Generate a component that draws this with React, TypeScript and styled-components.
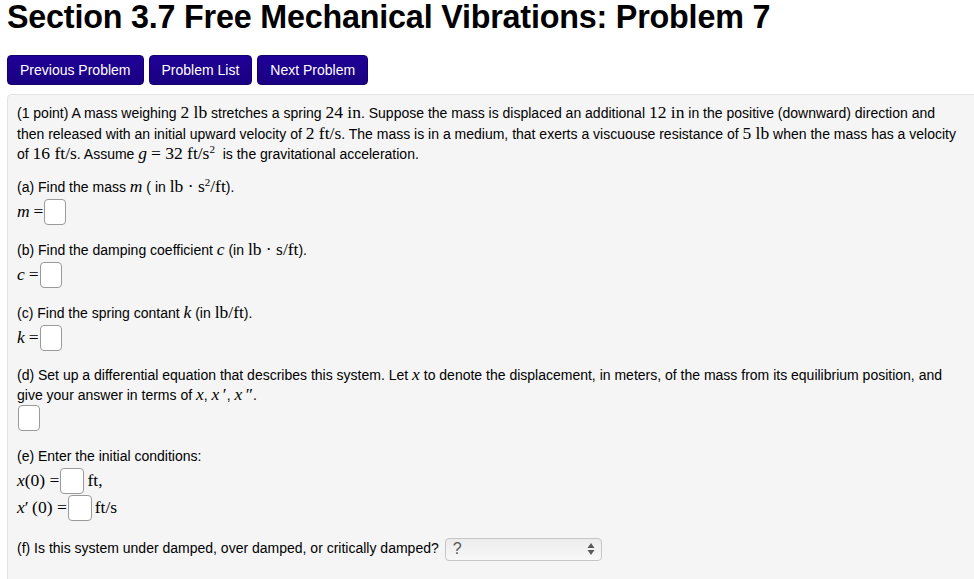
import React from 'react'
import styled, { createGlobalStyle } from 'styled-components'

const Global = createGlobalStyle`
  html, body {
    margin: 0;
    padding: 0;
    background: #ffffff;
    overflow: hidden;
  }
  body {
    font-family: "Liberation Sans", Helvetica, Arial, sans-serif;
    color: #000;
  }
`

const Page = styled.div`
  padding: 0 0 0 7px;
`

const Title = styled.h1`
  margin: 0;
  padding-top: 0;
  font-size: 32.3px;
  line-height: 35px;
  font-weight: bold;
  letter-spacing: -0.2px;
`

const Nav = styled.nav`
  display: flex;
  gap: 5px;
  margin-top: 20px;
`

const NavButton = styled.a`
  display: flex;
  align-items: center;
  height: 30px;
  padding: 0 12px;
  box-sizing: border-box;
  border-radius: 4px;
  border: 1px solid #16006e;
  background: linear-gradient(#1f0096, #1a0082);
  color: #fff;
  font-size: 14px;
  text-decoration: none;
`

const Panel = styled.div`
  margin-top: 9px;
  width: 1000px;
  box-sizing: border-box;
  background: #f5f5f5;
  border: 1px solid #e3e3e3;
  border-radius: 4px;
  padding: 8px 9px 40px;
  font-size: 14px;
  line-height: 20.5px;
`

const Para = styled.p`
  margin: 0 0 12px;
`

const M = styled.span`
  font-family: "Liberation Serif", "Times New Roman", serif;
  font-size: 17.5px;
  line-height: 1;
`

const V = styled(M)`
  font-style: italic;
`

const Sup = styled.sup`
  font-size: 11px;
  line-height: 0;
  vertical-align: 6px;
`

const Row = styled.div<{ $tight?: boolean }>`
  display: flex;
  align-items: center;
  height: 27px;
  margin-top: ${(p) => (p.$tight ? 0 : 2)}px;

  & + & {
    margin-top: 0;
  }
`

const Part = styled.div<{ $gap?: number }>`
  margin-bottom: ${(p) => p.$gap ?? 14}px;
`

const Text = styled.div`
  line-height: 20px;
`

const Blank = styled.span<{ $w?: number }>`
  display: inline-block;
  width: ${(p) => p.$w ?? 22}px;
  height: 26px;
  box-sizing: border-box;
  border: 1px solid #9a9a9a;
  border-radius: 4px;
  background: #fff;
  margin: 0 3px 0 1px;
`

const SelectBox = styled.span`
  display: inline-flex;
  align-items: center;
  justify-content: space-between;
  width: 157px;
  height: 23px;
  box-sizing: border-box;
  margin-left: 6px;
  padding: 0 6px 0 7px;
  border: 1px solid #c6c6c6;
  border-radius: 4px;
  background: linear-gradient(#ececec, #f8f8f8);
  color: #555;
  font-size: 16px;
  vertical-align: middle;
`

const Arrows = () => (
  <svg width="8" height="14" viewBox="0 0 8 14">
    <path d="M4 1 L7.5 6 L0.5 6 Z" fill="#5a5a5a" />
    <path d="M4 13 L7.5 8 L0.5 8 Z" fill="#5a5a5a" />
  </svg>
)

const App: React.FC = () => {
  return (
    <Page>
      <Global />
      <Title>Section 3.7 Free Mechanical Vibrations: Problem 7</Title>
      <Nav>
        <NavButton href="#">Previous Problem</NavButton>
        <NavButton href="#">Problem List</NavButton>
        <NavButton href="#">Next Problem</NavButton>
      </Nav>
      <Panel>
        <Para>
          (1 point) A mass weighing <M>2 lb</M> stretches a spring <M>24 in</M>. Suppose the mass is
          displaced an additional <M>12 in</M> in the positive (downward) direction and
          <br />
          then released with an initial upward velocity of <M>2 ft/s</M>. The mass is in a medium,
          that exerts a viscuouse resistance of <M>5 lb</M> when the mass has a velocity
          <br />
          of <M>16 ft/s</M>. Assume <V>g</V> <M>= 32 ft/s<Sup>2</Sup></M>&nbsp; is the gravitational
          acceleration.
        </Para>

        <Part>
          <Text>
            (a) Find the mass <V>m</V> ( in <M>lb · s<Sup>2</Sup>/ft</M>).
          </Text>
          <Row>
            <V>m</V>&nbsp;<M>=</M>
            <Blank />
          </Row>
        </Part>

        <Part>
          <Text>
            (b) Find the damping coefficient <V>c</V> (in <M>lb · s/ft</M>).
          </Text>
          <Row>
            <V>c</V>&nbsp;<M>=</M>
            <Blank />
          </Row>
        </Part>

        <Part $gap={13}>
          <Text>
            (c) Find the spring contant <V>k</V> (in <M>lb/ft</M>).
          </Text>
          <Row>
            <V>k</V>&nbsp;<M>=</M>
            <Blank />
          </Row>
        </Part>

        <Part $gap={14}>
          <Text>
            (d) Set up a differential equation that describes this system. Let <V>x</V> to denote
            the displacement, in meters, of the mass from its equilibrium position, and
            <br />
            give your answer in terms of <V>x</V>, <V>x</V>
            <M>&thinsp;′</M>, <V>x</V>
            <M>&thinsp;″</M>.
          </Text>
          <Row $tight>
            <Blank />
          </Row>
        </Part>

        <Part $gap={16}>
          <Text>(e) Enter the initial conditions:</Text>
          <Row>
            <V>x</V>
            <M>(0)&nbsp;=</M>
            <Blank $w={24} />
            <M>ft,</M>
          </Row>
          <Row>
            <V>x</V>
            <M>′&thinsp;(0)&nbsp;=</M>
            <Blank $w={24} />
            <M>ft/s</M>
          </Row>
        </Part>

        <Part>
          <Text>
            (f) Is this system under damped, over damped, or critically damped?
            <SelectBox>
              <span>?</span>
              <Arrows />
            </SelectBox>
          </Text>
        </Part>
      </Panel>
    </Page>
  )
}

export default App
